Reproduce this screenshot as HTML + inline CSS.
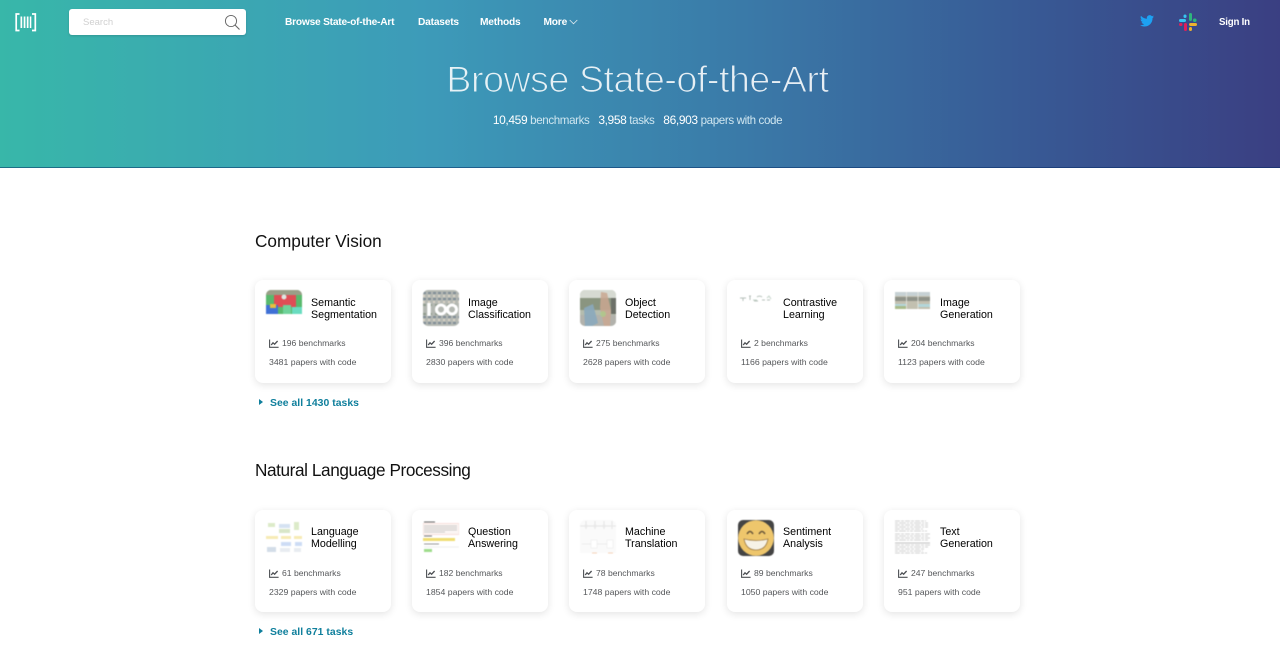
<!DOCTYPE html>
<html><head><meta charset="utf-8"><title>Browse State-of-the-Art</title>
<style>
*{box-sizing:border-box}
html,body{margin:0;padding:0;width:1280px;height:657px;overflow:hidden;background:#fff;font-family:"Liberation Sans",sans-serif}
.abs,.hero a,.t{position:absolute;white-space:nowrap}
.hero{position:absolute;left:0;top:0;width:1280px;height:168px;background:linear-gradient(90deg,#38b7a9 0%,#3d9bb9 33%,#3a7aa8 58%,#385a95 80%,#3a3f82 100%);border-bottom:1px solid rgba(0,40,100,.5)}
.nav{font-size:10.2px;font-weight:700;color:#fff;top:16px;line-height:13px;letter-spacing:-.2px}
.search{position:absolute;left:69px;top:9px;width:177px;height:26px;background:#fff;border-radius:3px;box-shadow:0 1px 2px rgba(0,0,0,.15)}
.search span{position:absolute;left:14px;top:8px;font-size:9.5px;line-height:11px;color:#d0d0d0}
h1{position:absolute;margin:0;left:340px;width:595px;top:56px;text-align:center;font-weight:400;font-size:37.5px;line-height:46px;color:#fff;letter-spacing:-.42px;filter:url(#thin);opacity:.88;white-space:nowrap}
.sub{position:absolute;top:113px;left:340px;width:595px;text-align:center;font-size:11.6px;line-height:14px;color:#cfe6f0;white-space:nowrap;letter-spacing:-.38px}
.sub b{font-weight:400;color:#fff;font-size:12px}
.sub i{font-style:normal;margin-left:6px}
h2{position:absolute;margin:0;left:255px;font-weight:400;font-size:17.2px;line-height:20px;color:#111;white-space:nowrap}
.card{position:absolute;width:136px;height:103px;background:#fff;border-radius:8px;box-shadow:0 2px 8px rgba(0,0,0,.11)}
.card svg.th{position:absolute;left:11px;top:10px;width:36px;height:36px;border-radius:5px;filter:blur(.45px)}
.card .n{position:absolute;left:56px;top:16.5px;font-size:10.7px;line-height:12.8px;color:#000;white-space:nowrap}
.r2 .n{top:15.5px}
.card .b{position:absolute;left:27px;top:57px;font-size:8.6px;line-height:12px;color:#55575a;white-space:nowrap}
.card .p{position:absolute;left:14px;top:76px;font-size:8.7px;line-height:12px;color:#55575a;white-space:nowrap}
.card svg.ch{position:absolute;left:14px;top:59px;width:10px;height:9px}
.see{position:absolute;left:259px;font-size:10.4px;font-weight:700;line-height:13px;color:#0f7f9c;white-space:nowrap;letter-spacing:.03px}
.see:before{content:"";display:inline-block;width:0;height:0;border-left:4px solid #0f7f9c;border-top:3.5px solid transparent;border-bottom:3.5px solid transparent;margin-right:7px;position:relative;top:-1px}
</style></head><body>
<svg width="0" height="0" style="position:absolute"><filter id="thin" x="-5%" y="-5%" width="110%" height="110%"><feMorphology operator="erode" radius="0.7"/></filter>
<symbol id="chart" viewBox="0 0 10 9"><path d="M.6.5V8.300H9.600" fill="none" stroke="#4d5054" stroke-width="1.100"/><path d="M2.200 6L4 3.800 5.600 5.200 8.600 2" fill="none" stroke="#4d5054" stroke-width="1.300"/></symbol></svg>

<div class="hero">
<svg class="abs" style="left:15px;top:13px" width="22" height="19" viewBox="0 0 22 19"><path d="M4.500 1H1.200V17.500H4.500" fill="none" stroke="#fff" stroke-width="1.700"/><path d="M17 1H20.300V17.500H17" fill="none" stroke="#fff" stroke-width="1.700"/><path d="M5.500 3.500H7.200V15H5.500ZM8.700 3.500H10.400V15H8.700ZM11.800 3.500H13.500V15H11.800ZM14.800 3.500H16.300V15H14.800Z" fill="#fff"/></svg>
<div class="search"><span>Search</span><svg class="abs" style="left:155px;top:5px" width="17" height="17" viewBox="0 0 17 17"><circle cx="7" cy="7" r="5.600" fill="none" stroke="#666" stroke-width=".9"/><path d="M11 11L15.500 15.500" stroke="#666" stroke-width="1.100"/></svg></div>
<a class="nav" style="left:285px;letter-spacing:-.22px">Browse State-of-the-Art</a>
<a class="nav" style="left:418px">Datasets</a>
<a class="nav" style="left:480px">Methods</a>
<a class="nav" style="left:543.500px">More</a>
<svg class="abs" style="left:569px;top:19px" width="9" height="6" viewBox="0 0 9 6"><path d="M.7 1L4.500 4.800 8.300 1" fill="none" stroke="#dfeaf0" stroke-width=".8"/></svg>
<svg class="abs" style="left:1140px;top:15px" width="14" height="12" viewBox="0 0 24 20"><path fill="#1da1f2" d="M24 2.400c-.9.4-1.800.7-2.800.8 1-.6 1.800-1.600 2.200-2.700-1 .6-2 1-3.100 1.200A4.900 4.900 0 0 0 11.900 6.200C7.800 6 4.200 4 1.700.9c-1.300 2.200-.7 5.100 1.500 6.600-.8 0-1.600-.2-2.200-.6 0 2.400 1.700 4.400 3.900 4.900-.7.2-1.500.2-2.200.1.600 2 2.400 3.400 4.600 3.400A9.900 9.900 0 0 1 0 17.300 14 14 0 0 0 7.500 19.500c9.100 0 14.300-7.700 14-14.600.9-.7 1.800-1.500 2.500-2.500z"/></svg>
<svg class="abs" style="left:1179px;top:13px" width="18" height="18" viewBox="0 0 18 18"><rect x="0" y="6" width="7" height="3" rx="1.500" fill="#36c5f0"/><rect x="4.500" y="1.500" width="3" height="3.500" rx="1.500" fill="#36c5f0"/><rect x="10" y="0" width="3" height="8" rx="1.500" fill="#2eb67d"/><rect x="14" y="5.500" width="3.500" height="3.500" rx="1.500" fill="#2eb67d"/><rect x="0" y="10" width="3.500" height="3" rx="1.500" fill="#e01e5a"/><rect x="5" y="10" width="3" height="8" rx="1.500" fill="#e01e5a"/><rect x="10" y="10" width="8" height="3" rx="1.500" fill="#ecb22e"/><rect x="10" y="14" width="3" height="4" rx="1.500" fill="#ecb22e"/></svg>
<a class="nav" style="left:1219px;top:16px;font-size:9.700px;letter-spacing:-.2px">Sign In</a>
<h1>Browse State-of-the-Art</h1>
<div class="sub"><b>10,459</b> benchmarks <i></i><b>3,958</b> tasks <i></i><b>86,903</b> papers with code</div>
</div>

<h2 style="top:231px">Computer Vision</h2>

<div class="card" style="left:255px;top:280px"><svg class="th" viewBox="0 0 36 36"><rect width="36" height="36" fill="#fff"/><rect width="36" height="24" fill="#59b96d"/><rect width="36" height="5" fill="#9a9f88"/><rect x="8" y="5" width="22" height="12" fill="#df4d55"/><circle cx="18" cy="7" r="2.500" fill="#dfe6e2"/><rect x="0" y="15" width="12" height="9" fill="#3f70d6"/><rect x="4" y="14" width="6" height="4" fill="#e6bf3f"/><rect x="17" y="15" width="8" height="9" fill="#6fd29a"/><rect x="26" y="17" width="10" height="7" fill="#69dcc0"/></svg><div class="n">Semantic<br>Segmentation</div><svg class="ch"><use href="#chart"/></svg><div class="b">196 benchmarks</div><div class="p">3481 papers with code</div></div>

<div class="card" style="left:412px;top:280px"><svg class="th" viewBox="0 0 36 36"><rect width="36" height="36" fill="#b4b8b2"/><path d="M0 3H36M0 9H36M0 27H36M0 33H36" stroke="#7f8c96" stroke-width="2" stroke-dasharray="3 2"/><path d="M0 6H36M0 12H36M0 30H36" stroke="#d9d3c6" stroke-width="2" stroke-dasharray="2 3"/><path d="M0 15H36M0 24H36" stroke="#8e9a8c" stroke-width="2" stroke-dasharray="3 3"/><path d="M6 13V26" stroke="#fff" stroke-width="3.500"/><circle cx="18" cy="19.500" r="4.500" fill="none" stroke="#fff" stroke-width="3"/><circle cx="29" cy="19.500" r="4.500" fill="none" stroke="#fff" stroke-width="3"/></svg><div class="n">Image<br>Classification</div><svg class="ch"><use href="#chart"/></svg><div class="b">396 benchmarks</div><div class="p">2830 papers with code</div></div>

<div class="card" style="left:569px;top:280px"><svg class="th" viewBox="0 0 36 36"><rect width="36" height="36" fill="#b5bcae"/><rect width="36" height="9" fill="#d6dad2"/><rect x="0" y="8" width="36" height="12" fill="#8a9580"/><rect y="25" width="36" height="11" fill="#b2b2ac"/><path d="M21 2L27 3 31 20 30 36H24L20 18Z" fill="#c9a791" opacity=".85"/><path d="M4 18L13 14 18 33 12 36H5Z" fill="#8aa8bd" opacity=".9"/><rect x="31" y="8" width="5" height="16" fill="#6c7068"/><circle cx="23" cy="24" r="3" fill="#a8d08a" opacity=".7"/></svg><div class="n">Object<br>Detection</div><svg class="ch"><use href="#chart"/></svg><div class="b">275 benchmarks</div><div class="p">2628 papers with code</div></div>

<div class="card" style="left:727px;top:280px"><svg class="th" viewBox="0 0 36 36"><path d="M2 8H8M5 8V11M11 6H13M12 6V10M16 11H20M19 7a3 2 0 0 1 5 0M24 10H27M29 10H32" stroke="#b5bfb9" stroke-width="1" fill="none"/><path d="M15 10H19M29 8l2-2 2 3" stroke="#c4d3c8" stroke-width="1" fill="none"/></svg><div class="n">Contrastive<br>Learning</div><svg class="ch"><use href="#chart"/></svg><div class="b">2 benchmarks</div><div class="p">1166 papers with code</div></div>

<div class="card" style="left:884px;top:280px"><svg class="th" viewBox="0 0 36 36" style="border-radius:0"><rect y="2" width="35" height="17" fill="#c2c0b0"/><rect y="2" width="35" height="4" fill="#c6d1d4"/><rect y="7" width="35" height="4" fill="#8f9389"/><rect y="14" width="11" height="3" fill="#b3d6da"/><rect x="23" y="14" width="12" height="3" fill="#b3d6da"/><rect y="16" width="11" height="3" fill="#a9bb8a"/><path d="M11.500 2V19M23 2V19" stroke="#e6e6e0" stroke-width=".8"/></svg><div class="n">Image<br>Generation</div><svg class="ch"><use href="#chart"/></svg><div class="b">204 benchmarks</div><div class="p">1123 papers with code</div></div>

<div class="see" style="top:397px">See all 1430 tasks</div>

<h2 style="top:460px;letter-spacing:-.41px">Natural Language Processing</h2>

<div class="card r2" style="left:255px;top:510px;height:102px"><svg class="th" viewBox="0 0 36 36"><rect x="2" y="3" width="7" height="4" fill="#dcebc9"/><rect x="13" y="4" width="11" height="4" fill="#d5e2f2"/><rect x="28" y="2" width="5" height="8" fill="#dcebc9"/><rect x="13" y="9" width="11" height="4" fill="#d8e6c8"/><rect x="0" y="16" width="12" height="3" fill="#f7ebb5"/><rect x="15" y="16" width="10" height="3" fill="#f7ebb5"/><rect x="28" y="16" width="8" height="3" fill="#f7ebb5"/><rect x="15" y="22" width="10" height="4" fill="#cddcf5"/><rect x="29" y="22" width="7" height="4" fill="#cddcf5"/><rect x="1" y="27" width="9" height="5" fill="#d3dde8"/><rect x="14" y="28" width="10" height="4" fill="#e8ecf1"/><rect x="28" y="28" width="7" height="4" fill="#e8ecf1"/></svg><div class="n">Language<br>Modelling</div><svg class="ch"><use href="#chart"/></svg><div class="b">61 benchmarks</div><div class="p">2329 papers with code</div></div>

<div class="card r2" style="left:412px;top:510px;height:102px"><svg class="th" viewBox="0 0 36 36" style="border-radius:0"><path d="M1 2H12" stroke="#666" stroke-width="1"/><rect y="3.500" width="36" height="11" fill="#fbf5f3" stroke="#f1c7c2" stroke-width=".5"/><path d="M1 6H34M1 8H34M1 10H34M1 12H22" stroke="#bdbdbd" stroke-width=".7"/><path d="M1 16H9" stroke="#777"/><rect y="18" width="32" height="3" fill="#f0dd72"/><path d="M1 24H16" stroke="#999"/><path d="M1 27H36" stroke="#eee"/><rect x="1" y="29" width="8" height="3" fill="#9fdc8c"/></svg><div class="n">Question<br>Answering</div><svg class="ch"><use href="#chart"/></svg><div class="b">182 benchmarks</div><div class="p">1854 papers with code</div></div>

<div class="card r2" style="left:569px;top:510px;height:102px"><svg class="th" viewBox="0 0 36 36"><rect width="36" height="33" fill="#fafafa"/><path d="M0 6H36" stroke="#e6e6e6"/><path d="M6 1V9M15 1V9M24 1V9M32 1V9" stroke="#e6e6e6"/><circle cx="6" cy="6" r="1.500" fill="#e8e8e8"/><circle cx="15" cy="6" r="1.500" fill="#e8e8e8"/><circle cx="24" cy="6" r="1.500" fill="#e8e8e8"/><path d="M2 24H32" stroke="#ececec"/><rect x="11" y="20" width="6" height="8" fill="#fff" stroke="#e8e8e8" stroke-width=".5"/><rect x="27" y="20" width="6" height="8" fill="#fff" stroke="#e8e8e8" stroke-width=".5"/><path d="M12 33H17M28 33H33" stroke="#f6d2b8"/></svg><div class="n">Machine<br>Translation</div><svg class="ch"><use href="#chart"/></svg><div class="b">78 benchmarks</div><div class="p">1748 papers with code</div></div>

<div class="card r2" style="left:727px;top:510px;height:102px"><svg class="th" viewBox="0 0 36 36"><rect width="36" height="36" fill="#444"/><circle cx="18" cy="18" r="17.800" fill="#eec66c"/><path d="M9 14q3-5 6 0M21 14q3-5 6 0" fill="none" stroke="#6a573a" stroke-width="1.500"/><path d="M6 19Q18 22 30 19 28 30 18 30 8 30 6 19Z" fill="#f6f2e6" stroke="#a07e48" stroke-width=".8"/></svg><div class="n">Sentiment<br>Analysis</div><svg class="ch"><use href="#chart"/></svg><div class="b">89 benchmarks</div><div class="p">1050 papers with code</div></div>

<div class="card r2" style="left:884px;top:510px;height:102px"><svg class="th" viewBox="0 0 36 36" style="border-radius:0"><path d="M0 1H31M0 5H33M0 9H28M0 14H35M0 18H35M0 25H35M0 29H30M0 33H32" stroke="#d2d2d2" stroke-width=".9" stroke-dasharray="5 1 3 1"/><path d="M0 3H34M0 7H34M0 11H32M0 16H34M0 20H33M0 27H34M0 31H28" stroke="#d2d2d2" stroke-width=".9" stroke-dasharray="3 1 7 1 2 1"/><path d="M0 23H35" stroke="#aaa" stroke-width=".8"/></svg><div class="n">Text<br>Generation</div><svg class="ch"><use href="#chart"/></svg><div class="b">247 benchmarks</div><div class="p">951 papers with code</div></div>

<div class="see" style="top:626px">See all 671 tasks</div>
</body></html>
